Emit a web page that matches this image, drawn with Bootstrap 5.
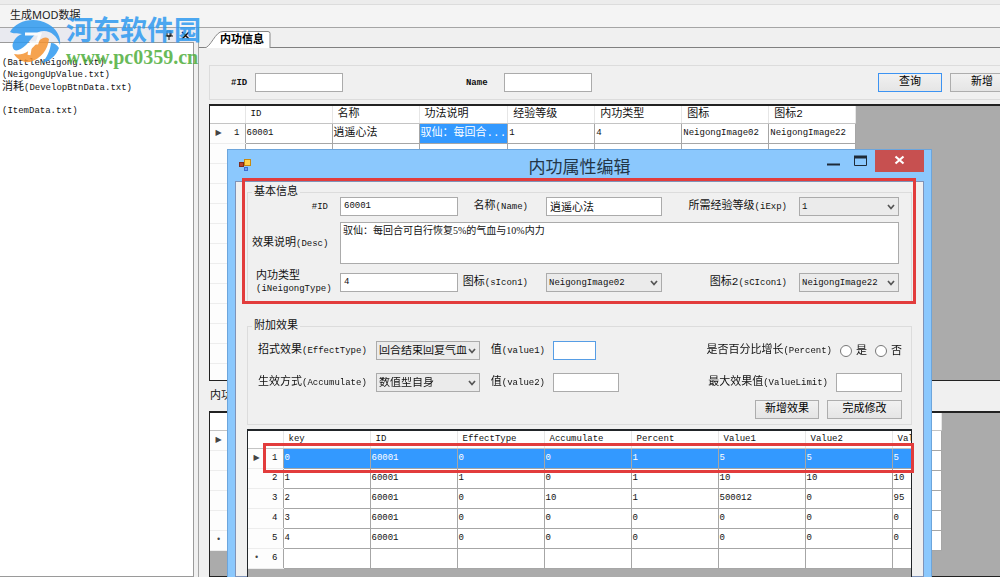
<!DOCTYPE html>
<html lang="zh-CN">
<head>
<meta charset="utf-8">
<meta name="viewport" content="width=device-width, initial-scale=1">
<title>内功属性编辑</title>
<link href="https://cdn.jsdelivr.net/npm/bootstrap@5.3.0/dist/css/bootstrap.min.css" rel="stylesheet">
<style>
body{font:9px/12px "Liberation Mono","Noto Sans CJK SC",monospace;color:#111;background:#f0f0f0}
.zh{font-size:11px;line-height:12px}
.strip{height:5px;background:#ececec;border-bottom:1px solid #dcdcdc}
.menubar{height:23px;background:#f4f4f4;border-bottom:1px solid #a5a5a5;padding:0 10px}
.menubar a{font:11px/20px "Noto Sans","Noto Sans CJK SC",sans-serif;color:#222}
.side{width:194px}
.side-head{height:14px;background:#e9eaf0}
.files{border:1px solid #9a9a9a;border-left:0;background:#fff;padding:14px 2px}
.files li{height:12px;white-space:nowrap}
.pane{border-left:1px solid #a5a5a5;margin-left:4px;min-width:0}
.tabs{height:20px;border-bottom:1px solid #808080;padding:2px 0 0 5px}
.tabs svg{width:68px;height:18px}
.tabs a{left:21px;top:5px;color:#000;line-height:14px}
.inner{padding:17px 0 0 10px}
.search{height:35px;border:1px solid #dcdcdc;border-right:0;padding-left:21px;margin-right:-14px}
.sp1{flex:3}.sp2{flex:7}
.edit,.pick,.area{display:block;width:100%;border:1px solid #ababab;background:#fff;color:#111;border-radius:0;font-size:9px;line-height:12px;padding:0 3px;outline:0}
.edit,.pick{height:19px}
.edit{padding-bottom:2px}
.area{height:42px;resize:none;padding:2px;font:10px/12px "Liberation Serif","Noto Sans CJK SC",serif}
.pick{appearance:none;padding-left:2px;background:#ebebeb url("data:image/svg+xml,%3Csvg xmlns='http://www.w3.org/2000/svg' width='8' height='6'%3E%3Cpath d='M1 1l3 3.5L7 1' fill='none' stroke='%23555' stroke-width='1.7'/%3E%3C/svg%3E") no-repeat right 3px center}
.edit.zh,.pick.zh{font-size:11px}
.focus-edit{border-color:#569de5}
.wbtn{height:19px;border:1px solid #adadad;background:linear-gradient(#f1f1f1,#e5e5e5);border-radius:0;padding:0;font-size:11px;line-height:15px;color:#000}
.wbtn.first{border-color:#3c93f2}
.w64{width:64px}.w75{width:75px}.w88{width:88px}.w43{width:43px}
.gridbox{background:#ababab;border:1px solid #222;border-top-width:2px;overflow:hidden;border-right:0}
.gridbox table{table-layout:fixed;border-collapse:collapse;background:#fff}
.gridbox .wide{width:731px}
.gridbox td,.gridbox th{border:1px solid #a6a6a6;border-top:0;padding:0 1px;height:20px;font-weight:400;white-space:nowrap;overflow:hidden;line-height:12px}
.gridbox thead th{height:17px;padding:0 5px;border-right-color:#e6e6e6;border-bottom-color:#c4c4c4;text-align:left}
.gridbox tbody th{border-left:0;border-bottom-color:#ededed;text-align:right;padding-right:5px;background:#fdfdfd}
.gridbox th:first-child{border-left:0}
.mk{float:left;width:9px;margin-left:3px;text-align:center;font-family:"DejaVu Sans";font-size:8px;color:#444}
.sel{background:#3399ff;color:#fff}
.upper{height:277px}
.between{height:30px;padding:9px 0 0 1px}
.dlg{left:227px;right:68px;top:149px;bottom:0;background:#8bc8fd;border:1px solid #6ca5dc;border-bottom:0;padding:0 7px;overflow:hidden}
.dlg-bar{height:31px}
.dlg-title{font:17px/31px "Noto Sans CJK SC",sans-serif;color:#233647}
.caps{right:0;top:0}
.caps button{border:0;background:none;padding:0;height:22px;width:28px;display:block}
.caps .x{width:49px;background:#c75050}
.dlg-body{background:#f0f0f0;border:1px solid #7f93b8;padding:2px 11px 0 11px;height:100%}
fieldset.grp{border:1px solid #dcdcdc;position:relative}
.grp legend{position:absolute;left:4px;top:-7px;width:auto;margin:0;padding:0 2px;background:#f0f0f0;float:none}
.f1{display:grid;grid-template-columns:88px 118px 88px 116px 1fr 100px;padding:4px 12px 6px 4px;align-items:center;row-gap:6px}
.f2{display:grid;grid-template-columns:118px 104px 73px 66px 1fr 66px;padding:14px 9px 5px 10px;align-items:center;row-gap:13px}
.lb{padding-right:12px;text-align:right;white-space:nowrap}
.lb2{padding-right:18px}.lb3{padding-right:8px}.lb4{padding-right:4px}
.radio{width:12px;height:12px;margin:0}
.acts{grid-column:1/-1;margin-top:-5px}
.hot{border:3px solid #e23c3c;pointer-events:none}
.hot1{left:242px;right:84px;top:178px;height:126px}
.hot2{left:263px;right:86px;top:443px;height:30px}
.wm{left:8px;top:14px;opacity:.85;pointer-events:none}
.wm-name{font:bold 27px/30px "Noto Sans CJK SC",sans-serif;color:#2f9af0}
.wm-url{font:bold 20px/26px "Liberation Serif",serif;color:#4fae3c}
</style>
</head>
<body class="vh-100 overflow-hidden">
<div class="d-flex flex-column vh-100">
  <div class="strip"></div>
  <nav class="menubar"><a class="text-decoration-none" href="#">生成MOD数据</a></nav>
  <div class="d-flex flex-grow-1" style="min-height:0">
    <aside class="side d-flex flex-column flex-shrink-0">
      <div class="side-head d-flex justify-content-end gap-2 align-items-center pe-1">
        <svg width="8" height="10" viewBox="0 0 8 10"><path d="M2 1h4v5H2zM5 1v5M0 6h8M4 6v4" fill="none" stroke="#111"/></svg>
        <svg width="9" height="9" viewBox="0 0 9 9"><path d="M1 1l7 7M8 1l-7 7" stroke="#111" stroke-width="1.5"/></svg>
      </div>
      <ul class="files list-unstyled flex-grow-1 mb-0">
        <li>(BattleNeigong.txt)</li>
        <li>(NeigongUpValue.txt)</li>
        <li><span class="zh">消耗</span>(DevelopBtnData.txt)</li>
        <li></li>
        <li>(ItemData.txt)</li>
      </ul>
    </aside>
    <main class="pane flex-grow-1 d-flex flex-column overflow-hidden">
      <div class="tabs position-relative flex-shrink-0">
        <svg class="d-block" viewBox="0 0 68 18"><path d="M0 18C7 18 11 1 19 1.500H64q2 0 2 2V18" fill="#fff" stroke="#888"/></svg>
        <a href="#" class="zh fw-bold position-absolute text-decoration-none">内功信息</a>
      </div>
      <div class="inner flex-grow-1 d-flex flex-column">
        <form class="search d-flex align-items-center flex-shrink-0">
          <label for="qid" class="fw-bold me-2">#ID</label><input id="qid" class="edit w88">
          <span class="sp1"></span>
          <label for="qn" class="fw-bold me-3">Name</label><input id="qn" class="edit w88">
          <span class="sp2"></span>
          <button type="button" class="wbtn first w64">查询</button>
          <button type="button" class="wbtn w64 ms-2">新增</button>
        </form>
        <div class="gridbox upper flex-shrink-0 mt-1">
          <table>
            <colgroup><col style="width:35px"><col span="7" style="width:87px"></colgroup>
            <thead><tr><th></th><th>ID</th><th class="zh">名称</th><th class="zh">功法说明</th><th class="zh">经验等级</th><th class="zh">内功类型</th><th class="zh">图标</th><th class="zh">图标2</th></tr></thead>
            <tbody>
              <tr><th><span class="mk">▶</span>1</th><td>60001</td><td class="zh">逍遥心法</td><td class="zh sel">驭仙：每回合...</td><td>1</td><td>4</td><td>NeigongImage02</td><td>NeigongImage22</td></tr>
              <tr><th></th><td></td><td></td><td></td><td></td><td></td><td></td><td></td></tr>
              <tr><th></th><td></td><td></td><td></td><td></td><td></td><td></td><td></td></tr>
              <tr><th></th><td></td><td></td><td></td><td></td><td></td><td></td><td></td></tr>
              <tr><th></th><td></td><td></td><td></td><td></td><td></td><td></td><td></td></tr>
              <tr><th></th><td></td><td></td><td></td><td></td><td></td><td></td><td></td></tr>
              <tr><th></th><td></td><td></td><td></td><td></td><td></td><td></td><td></td></tr>
              <tr><th></th><td></td><td></td><td></td><td></td><td></td><td></td><td></td></tr>
              <tr><th></th><td></td><td></td><td></td><td></td><td></td><td></td><td></td></tr>
              <tr><th></th><td></td><td></td><td></td><td></td><td></td><td></td><td></td></tr>
              <tr><th></th><td></td><td></td><td></td><td></td><td></td><td></td><td></td></tr>
              <tr><th></th><td></td><td></td><td></td><td></td><td></td><td></td><td></td></tr>
              <tr><th></th><td></td><td></td><td></td><td></td><td></td><td></td><td></td></tr>
            </tbody>
          </table>
        </div>
        <div class="between zh flex-shrink-0">内功</div>
        <div class="gridbox flex-grow-1">
          <table>
            <colgroup><col style="width:35px"><col span="8" style="width:87px"></colgroup>
            <thead><tr><th></th><th></th><th></th><th></th><th></th><th></th><th></th><th></th><th></th></tr></thead>
            <tbody>
              <tr><th><span class="mk">▶</span></th><td></td><td></td><td></td><td></td><td></td><td></td><td></td><td></td></tr>
              <tr><th></th><td></td><td></td><td></td><td></td><td></td><td></td><td></td><td></td></tr>
              <tr><th></th><td></td><td></td><td></td><td></td><td></td><td></td><td></td><td></td></tr>
              <tr><th></th><td></td><td></td><td></td><td></td><td></td><td></td><td></td><td></td></tr>
              <tr><th></th><td></td><td></td><td></td><td></td><td></td><td></td><td></td><td></td></tr>
              <tr><th><span class="mk">•</span></th><td></td><td></td><td></td><td></td><td></td><td></td><td></td><td></td></tr>
            </tbody>
          </table>
        </div>
      </div>
    </main>
  </div>
</div>

<section class="dlg position-absolute d-flex flex-column" role="dialog" aria-labelledby="dt">
  <div class="dlg-bar position-relative flex-shrink-0">
    <svg class="position-absolute" style="left:4px;top:9px" width="12" height="12" viewBox="0 0 12 12"><rect x="5.500" y=".5" width="6" height="6" fill="#ffd34d" stroke="#c88a10"/><rect x=".5" y="3.500" width="4" height="4" fill="#b8432f" stroke="#7e2a1c"/><rect x="5.500" y="8.500" width="3" height="3" fill="#6f9df0" stroke="#3d6fd0"/></svg>
    <div id="dt" class="dlg-title text-center">内功属性编辑</div>
    <div class="caps position-absolute d-flex">
      <button aria-label="最小化"><svg width="28" height="22"><path d="M8 14.500h13" stroke="#1e2b38" stroke-width="2"/></svg></button>
      <button aria-label="最大化"><svg width="28" height="22"><path d="M7.500 6v9.500h12V6" fill="none" stroke="#1e2b38"/><path d="M7 7h13" stroke="#1e2b38" stroke-width="3"/></svg></button>
      <button aria-label="关闭" class="x"><svg width="49" height="22"><path d="M20.500 6.500l8 7M28.500 6.500l-8 7" stroke="#fff" stroke-width="2.200"/></svg></button>
    </div>
  </div>
  <div class="dlg-body">
    <fieldset class="grp f1 mt-2">
      <legend class="zh">基本信息</legend>
      <label class="lb" for="a1">#ID</label><input id="a1" class="edit" value="60001">
      <label class="lb lb2" for="a2"><span class="zh">名称</span>(Name)</label><input id="a2" class="edit zh" value="逍遥心法">
      <label class="lb" for="a3"><span class="zh">所需经验等级</span>(iExp)</label><select id="a3" class="pick"><option>1</option></select>
      <label class="lb" for="a4"><span class="zh">效果说明</span>(Desc)</label><textarea id="a4" class="area" style="grid-column:span 5">驭仙：每回合可自行恢复5%的气血与10%内力</textarea>
      <label class="lb text-start ps-1" for="a5"><span class="zh">内功类型</span><br>(iNeigongType)</label><input id="a5" class="edit" value="4">
      <label class="lb lb2" for="a6"><span class="zh">图标</span>(sIcon1)</label><select id="a6" class="pick"><option>NeigongImage02</option></select>
      <label class="lb" for="a7"><span class="zh">图标2</span>(sCIcon1)</label><select id="a7" class="pick"><option>NeigongImage22</option></select>
    </fieldset>
    <fieldset class="grp f2 mt-4">
      <legend class="zh">附加效果</legend>
      <label class="lb" for="b1"><span class="zh">招式效果</span>(EffectType)</label><select id="b1" class="pick zh"><option>回合结束回复气血</option></select>
      <label class="lb lb3" for="b2"><span class="zh">值</span>(value1)</label><input id="b2" class="edit focus-edit w43" autofocus>
      <span class="lb lb4"><span class="zh">是否百分比增长</span>(Percent)</span>
      <div class="d-flex align-items-center gap-1 zh ps-1"><input class="radio" type="radio" name="p" id="p1"><label for="p1">是</label><input class="radio ms-1" type="radio" name="p" id="p2"><label for="p2">否</label></div>
      <label class="lb" for="b3"><span class="zh">生效方式</span>(Accumulate)</label><select id="b3" class="pick zh"><option>数值型自身</option></select>
      <label class="lb lb3" for="b4"><span class="zh">值</span>(value2)</label><input id="b4" class="edit">
      <label class="lb lb3" for="b5"><span class="zh">最大效果值</span>(ValueLimit)</label><input id="b5" class="edit">
      <div class="acts d-flex justify-content-end"><button type="button" class="wbtn w64 me-2">新增效果</button><button type="button" class="wbtn w75">完成修改</button></div>
    </fieldset>
    <div class="gridbox h-100 mt-1 border-end border-dark">
      <table class="wide">
        <colgroup><col style="width:35px"><col span="8" style="width:87px"></colgroup>
        <thead><tr><th></th><th>key</th><th>ID</th><th>EffectType</th><th>Accumulate</th><th>Percent</th><th>Value1</th><th>Value2</th><th>ValueLimit</th></tr></thead>
        <tbody>
          <tr><th><span class="mk">▶</span>1</th><td class="sel">0</td><td class="sel">60001</td><td class="sel">0</td><td class="sel">0</td><td class="sel">1</td><td class="sel">5</td><td class="sel">5</td><td class="sel">5</td></tr>
          <tr><th>2</th><td>1</td><td>60001</td><td>1</td><td>0</td><td>1</td><td>10</td><td>10</td><td>10</td></tr>
          <tr><th>3</th><td>2</td><td>60001</td><td>0</td><td>10</td><td>1</td><td>500012</td><td>0</td><td>95</td></tr>
          <tr><th>4</th><td>3</td><td>60001</td><td>0</td><td>0</td><td>0</td><td>0</td><td>0</td><td>0</td></tr>
          <tr><th>5</th><td>4</td><td>60001</td><td>0</td><td>0</td><td>0</td><td>0</td><td>0</td><td>0</td></tr>
          <tr><th><span class="mk">•</span>6</th><td></td><td></td><td></td><td></td><td></td><td></td><td></td><td></td></tr>
        </tbody>
      </table>
    </div>
  </div>
</section>
<div class="hot hot1 position-absolute"></div>
<div class="hot hot2 position-absolute"></div>

<div class="wm position-absolute d-flex">
  <svg width="54" height="52" viewBox="0 0 54 52"><path d="M2 18C8 7 26 2 40 10c9 5 13 13 12 21-3-9-9-14-16-14-9 0-12 8-18 14C12 37 6 38 5 34 3 29 8 22 14 20 9 19 5 20 2 18z" fill="#2f9af0"/><path d="M6 40c9 2 16-3 22-10 5-6 9-8 13-5-1 10-8 20-19 23-7 1-13-3-16-8z" fill="#f59331"/><path d="M51 34c-3 8-9 13-17 15 5-6 8-12 9-20 4 0 6 2 8 5z" fill="#2f9af0"/><path d="M17 20h15l-3 9h-6l-2 12" fill="none" stroke="#fff" stroke-width="3"/></svg>
  <div class="ms-1"><div class="wm-name">河东软件园</div><div class="wm-url">www.pc0359.cn</div></div>
</div>
</body>
</html>
